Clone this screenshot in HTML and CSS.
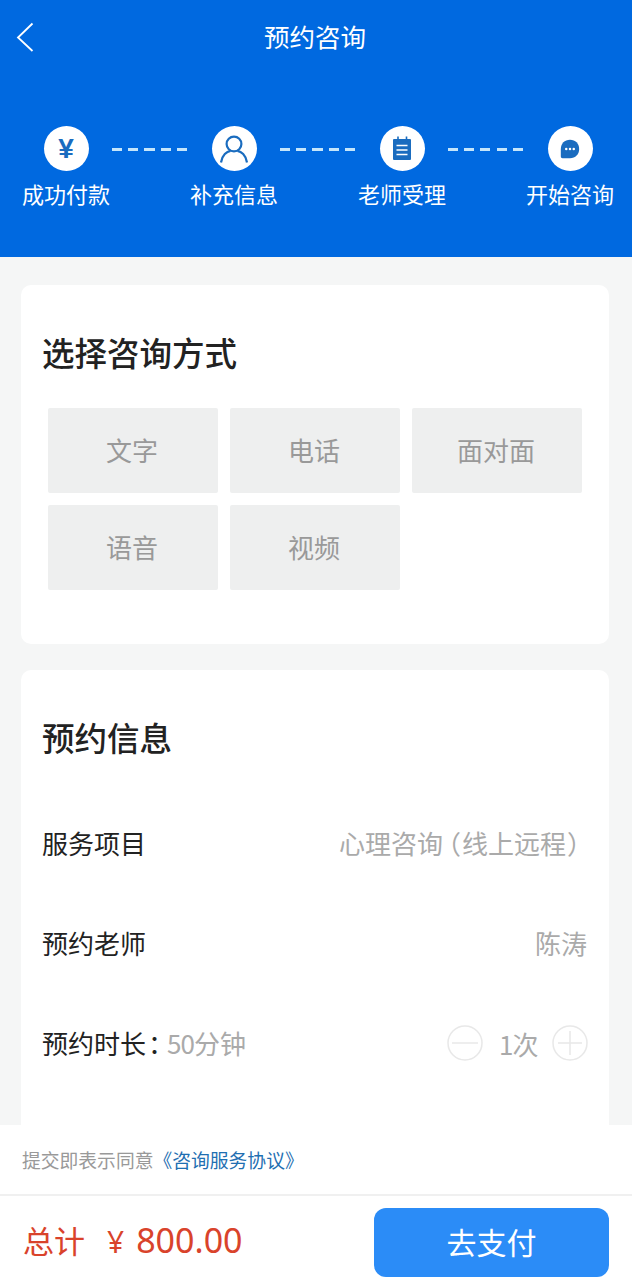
FILE: index.html
```html
<!DOCTYPE html>
<html lang="zh-CN">
  <head>
    <meta charset="utf8">
    <title>预约咨询</title>
    <link rel="stylesheet" href="styles.css">
  </head>
  <body>
    <div class="app">

      <div class="content">
        <div class="banner">
          <div class="navbar">
            <svg class="back" width="20" height="32" viewBox="0 0 20 32"><path d="M17.5 2.5 L3 16.5 L17.5 30" fill="none" stroke="#fff" stroke-width="1.8"/></svg>
            <span class="navbar-title">预约咨询</span>
          </div>

          <div class="steps">
            <div class="step">
              <div class="step-icon yen">¥</div>
              <div class="step-label">成功付款</div>
            </div>
            <div class="dashes"></div>
            <div class="step">
              <div class="step-icon">
                <svg width="30" height="30" viewBox="0 0 30 30" fill="none" stroke="#1a6cbf" stroke-width="2.2"><circle cx="15" cy="10" r="7.4"/><path d="M2 28.500 C3 21 8 17.500 11.500 16.800 M28 28.500 C27 21 22 17.500 18.500 16.800"/></svg>
              </div>
              <div class="step-label">补充信息</div>
            </div>
            <div class="dashes"></div>
            <div class="step">
              <div class="step-icon">
                <svg width="20" height="25" viewBox="0 0 20 25"><rect x="1" y="3" width="18" height="21" rx="1" fill="#1a6cbf"/><path d="M6 0.5v5M14.5 0.5v5" stroke="#1a6cbf" stroke-width="1.6"/><path d="M4.5 9.5h11M4.5 14h11M4.5 18.500h11" stroke="#fff" stroke-width="1.6"/></svg>
              </div>
              <div class="step-label">老师受理</div>
            </div>
            <div class="dashes"></div>
            <div class="step">
              <div class="step-icon">
                <svg width="20" height="20" viewBox="0 0 24 24"><path d="M12 1 C18.500 1 23 5.500 23 12 C23 18.500 18.500 23 12 23 L3 23 C1.800 23 1 22.200 1 21 L1 12 C1 5.500 5.500 1 12 1 Z" fill="#1a6cbf"/><circle cx="7.500" cy="12" r="1.500" fill="#fff"/><circle cx="12" cy="12" r="1.500" fill="#fff"/><circle cx="16.500" cy="12" r="1.500" fill="#fff"/></svg>
              </div>
              <div class="step-label">开始咨询</div>
            </div>
          </div>
        </div>

        <div class="card card-mode">
          <h2>选择咨询方式</h2>
          <div class="modes">
            <div class="mode">文字</div>
            <div class="mode">电话</div>
            <div class="mode">面对面</div>
            <div class="mode">语音</div>
            <div class="mode">视频</div>
          </div>
        </div>

        <div class="card card-info">
          <h2>预约信息</h2>
          <div class="row">
            <span class="row-label">服务项目</span>
            <span class="row-value">心理咨询<span class="paren-open">（</span>线上远程<span class="paren-close">）</span></span>
          </div>
          <div class="row">
            <span class="row-label">预约老师</span>
            <span class="row-value">陈涛</span>
          </div>
          <div class="row">
            <span class="row-label">预约时长<span class="colon">：</span><span class="row-value"><span class="digits">50</span>分钟</span></span>
            <div class="stepper">
              <svg width="36" height="36" viewBox="0 0 36 36" fill="none" stroke="#e8e8e8" stroke-width="1.500"><circle cx="18" cy="18" r="17"/><path d="M5 18h26"/></svg>
              <span class="row-value count"><span class="digits">1</span>次</span>
              <svg width="36" height="36" viewBox="0 0 36 36" fill="none" stroke="#e8e8e8" stroke-width="1.500"><circle cx="18" cy="18" r="17"/><path d="M6 18h24M18 6v24"/></svg>
            </div>
          </div>
        </div>
      </div>

      <div class="agreement">提交即表示同意<a class="agreement-link">《咨询服务协议》</a></div>

      <div class="paybar">
        <div class="total">总计<span class="total-price"><span class="currency">¥</span>800.00</span></div>
        <div class="pay-button">去支付</div>
      </div>

    </div>
  </body>
</html>
```

FILE: styles.css
```css
* {
  box-sizing: border-box;
}

body {
  margin: 0;
  background: #f5f6f6;
  font-family: "Noto Sans CJK SC", "Noto Sans", sans-serif;
}

.app {
  display: flex;
  flex-direction: column;
  height: 1281px;
  overflow: hidden;
}

.content {
  flex: 1;
  min-height: 0;
  overflow: hidden;
}

.banner {
  height: 257px;
  background: #0069e0;
  color: #fff;
}

.navbar {
  display: flex;
  align-items: center;
  justify-content: center;
  height: 74px;
  position: relative;
}

.back {
  position: absolute;
  left: 15px;
  top: 21px;
}

.navbar-title {
  font-size: 25.500px;
  padding: 0 2px 3px 0;
}

.steps {
  display: flex;
  align-items: flex-start;
  padding: 52px 18px 0 22px;
}

.step {
  width: 88px;
  flex: none;
  display: flex;
  flex-direction: column;
  align-items: center;
}

.step-icon {
  width: 45px;
  height: 45px;
  border-radius: 50%;
  background: #fff;
  display: flex;
  align-items: center;
  justify-content: center;
}

.yen {
  color: #1a6cbf;
  font-family: "Liberation Sans", sans-serif;
  font-size: 28px;
  font-weight: bold;
}

.step-label {
  margin-top: 6px;
  font-size: 22px;
  line-height: 33px;
  white-space: nowrap;
}

.dashes {
  flex: 1;
  height: 3px;
  margin: 22px -1px 0 2px;
  background: repeating-linear-gradient(to right, #c5e6fb 0, #c5e6fb 10px, transparent 10px, transparent 16.250px);
}

.card {
  background: #fff;
  border-radius: 10px;
  margin: 0 23px 0 21px;
}

.card h2 {
  margin: 0;
  font-size: 32.500px;
  font-weight: 500;
  line-height: 48px;
  color: #222;
}

.card-mode {
  margin-top: 28px;
  height: 359px;
  padding: 43px 22px 0 21px;
}

.modes {
  display: grid;
  grid-template-columns: repeat(3, 170px);
  grid-auto-rows: 85px;
  gap: 12px;
  margin: 32px 0 0 6px;
}

.mode {
  display: flex;
  align-items: center;
  justify-content: center;
  padding: 0 2px 2px 0;
  background: #eeefef;
  border-radius: 2px;
  color: #999;
  font-size: 26px;
}

.card-info {
  margin-top: 26px;
  height: 500px;
  padding: 43px 22px 0 21px;
}

.card-info h2 {
  margin-bottom: 31px;
}

.row {
  display: flex;
  align-items: center;
  justify-content: space-between;
  height: 100px;
  font-size: 26px;
  color: #222;
}

.row-value {
  color: #aaa;
  white-space: nowrap;
}

/* proportional punctuation, the shot has narrow brackets and colon */
.paren-open {
  font-feature-settings: "palt";
  margin: 0 2px 0 4px;
}

.paren-close {
  font-feature-settings: "palt";
  margin: 0 6px 0 2px;
}

.colon {
  font-feature-settings: "palt";
  margin: 0 6px 0 2px;
}

.digits {
  letter-spacing: -1px;
}

.stepper {
  display: flex;
  align-items: center;
  gap: 13.500px;
  margin: 2px -1px 0 0;
}

.count {
  margin-left: 3px;
}

.agreement {
  flex: none;
  height: 71px;
  padding: 20px 0 0 22px;
  background: #fff;
  border-bottom: 2px solid #f0f0f0;
  color: #999;
  font-size: 18.800px;
  line-height: 30px;
}

.agreement-link {
  color: #1f6fb2;
}

.paybar {
  flex: none;
  display: flex;
  align-items: center;
  justify-content: space-between;
  height: 85px;
  padding: 0 23px;
  background: #fff;
}

.total {
  padding-top: 2px;
  color: #d9432b;
  font-size: 31px;
}

.total-price {
  margin-left: 22px;
  font-family: "Noto Sans", sans-serif;
  font-size: 34px;
}

.currency {
  margin-right: 12px;
  font-size: 30px;
}

.pay-button {
  width: 235px;
  height: 69px;
  margin-top: 8px;
  padding-bottom: 4px;
  border-radius: 12px;
  background: #2b8cf7;
  color: #fff;
  font-size: 30px;
  display: flex;
  align-items: center;
  justify-content: center;
}
```
